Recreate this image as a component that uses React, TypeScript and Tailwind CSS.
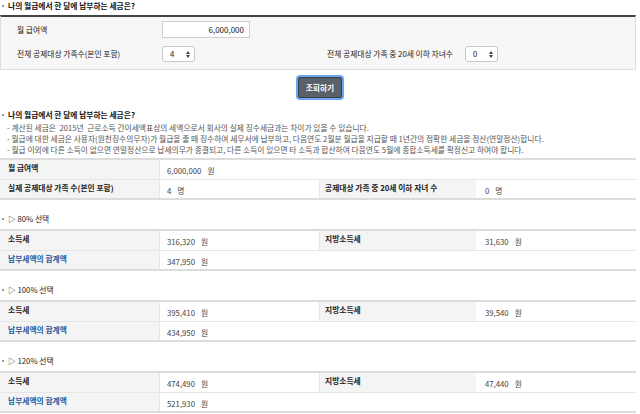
import React from "react"

type Cell = { label: string; value: string; unit?: string; blue?: boolean }

function Bullet() {
  return <span className="mr-[4px] inline-block h-[2px] w-[2px] bg-[#999]" />
}

function Heading({ children, bold }: { children: React.ReactNode; bold?: boolean }) {
  return (
    <div className={`flex items-center pl-[2px] ${bold ? "font-bold text-[#111]" : "text-[#222]"}`}>
      <Bullet />
      {children}
    </div>
  )
}

function SelectBox({ value }: { value: string }) {
  return (
    <div className="flex h-[16px] w-[33px] items-center justify-between rounded-[3px] border border-[#c8c8c8] bg-white pl-[7px] pr-[4px] text-[#222]">
      <span>{value}</span>
      <svg width="4" height="7" viewBox="0 0 4 7">
        <path d="M0 3 L2 0 L4 3 Z" fill="#444" />
        <path d="M0 4 L2 7 L4 4 Z" fill="#444" />
      </svg>
    </div>
  )
}

function Value({ cell }: { cell: Cell }) {
  return (
    <>
      {cell.value}
      <span className="ml-[6px]">{cell.unit ?? "원"}</span>
    </>
  )
}

function TableRow({ left, right, first }: { left: Cell; right?: Cell; first?: boolean }) {
  return (
    <div className={`flex h-[19px] ${first ? "" : "border-t border-[#e6e6e6]"}`}>
      <div
        className={`flex w-[160px] items-center border-r border-[#e6e6e6] bg-[#f4f4f4] pb-[3px] pl-[8px] font-bold ${
          left.blue ? "text-[#1a5ca3]" : "text-[#222]"
        }`}
      >
        {left.label}
      </div>
      {right ? (
        <>
          <div className="flex w-[160px] items-center border-r border-[#e6e6e6] pl-[7px] pt-[3px] text-[#444]">
            <Value cell={left} />
          </div>
          <div className="flex w-[156px] items-center bg-[#f4f4f4] pb-[3px] pl-[5px] font-bold text-[#222]">
            {right.label}
          </div>
          <div className="flex flex-1 items-center pl-[9px] pt-[3px] text-[#444]">
            <Value cell={right} />
          </div>
        </>
      ) : (
        <div className="flex flex-1 items-center pl-[7px] pt-[3px] text-[#444]">
          <Value cell={left} />
        </div>
      )}
    </div>
  )
}

function Table({ rows }: { rows: { left: Cell; right?: Cell }[] }) {
  return (
    <div className="border-y-2 border-[#dcdcdc]">
      {rows.map((r, i) => (
        <TableRow key={i} left={r.left} right={r.right} first={i === 0} />
      ))}
    </div>
  )
}

const results = [
  { pct: "80%", tax: "316,320", local: "31,630", total: "347,950" },
  { pct: "100%", tax: "395,410", local: "39,540", total: "434,950" },
  { pct: "120%", tax: "474,490", local: "47,440", total: "521,930" },
]

export default function App() {
  return (
    <div className="h-[414px] w-[640px] overflow-hidden bg-white font-['Noto_Sans_CJK_KR',sans-serif] text-[7.75px] leading-none text-[#333]">
      <div className="w-[636px]">
        <div className="h-[15px] pt-[2px]">
          <Heading bold>나의 월급에서 한 달에 납부하는 세금은?</Heading>
        </div>

        <div className="h-[55px] border-x border-b border-t-2 border-[#dedede] border-t-[#444] bg-[#f7f7f7] pl-[16px] pt-[4px]">
          <div className="flex h-[17px] items-center">
            <div className="w-[145px] text-[#222]">월 급여액</div>
            <div className="flex h-[17px] w-[88px] items-center justify-end border border-[#cfcfcf] bg-white pr-[5px] text-[8px] text-[#222]">
              6,000,000
            </div>
          </div>
          <div className="mt-[8px] flex h-[16px] items-center">
            <div className="w-[145px] text-[#222]">전체 공제대상 가족수(본인 포함)</div>
            <SelectBox value="4" />
            <div className="w-[132px]" />
            <div className="w-[138px] text-[#222]">전체 공제대상 가족 중 20세 이하 자녀수</div>
            <SelectBox value="0" />
          </div>
        </div>

        <div className="flex h-[38px] items-start justify-center pt-[7px]">
          <button className="ml-[4px] h-[21px] w-[44px] rounded-[2px] border border-[#3b3f45] bg-[#5a6068] font-bold text-white shadow-[0_0_0_2px_#6aa8f0]">
            조회하기
          </button>
        </div>

        <div className="h-[14px] pt-[3px]">
          <Heading bold>나의 월급에서 한 달에 납부하는 세금은?</Heading>
        </div>
        <div className="pl-[7px] leading-[11px] text-[#555]">
          <div>- 계산된 세금은&nbsp; 2015년&nbsp; 근로소득 간이세액표상의 세액으로서 회사의 실제 징수세금과는 차이가 있을 수 있습니다.</div>
          <div>- 월급에 대한 세금은 사용자(원천징수의무자)가 월급을 줄 때 징수하여 세무서에 납부하고, 다음연도 2월분 월급을 지급할 때 1년간의 정확한 세금을 정산(연말정산)합니다.</div>
          <div>- 월급 이외에 다른 소득이 없으면 연말정산으로 납세의무가 종결되고, 다른 소득이 있으면 타 소득과 합산하여 다음연도 5월에 종합소득세를 확정신고 하여야 합니다.</div>
        </div>

        <div className="mt-[3px]">
          <Table
            rows={[
              { left: { label: "월 급여액", value: "6,000,000" } },
              {
                left: { label: "실제 공제대상 가족 수(본인 포함)", value: "4", unit: "명" },
                right: { label: "공제대상 가족 중 20세 이하 자녀 수", value: "0", unit: "명" },
              },
            ]}
          />
        </div>

        {results.map((r) => (
          <div key={r.pct}>
            <div className="flex h-[29px] items-center pt-[9px]">
              <Heading>▷ {r.pct} 선택</Heading>
            </div>
            <Table
              rows={[
                {
                  left: { label: "소득세", value: r.tax },
                  right: { label: "지방소득세", value: r.local },
                },
                { left: { label: "납부세액의 합계액", value: r.total, blue: true } },
              ]}
            />
          </div>
        ))}
      </div>
    </div>
  )
}
